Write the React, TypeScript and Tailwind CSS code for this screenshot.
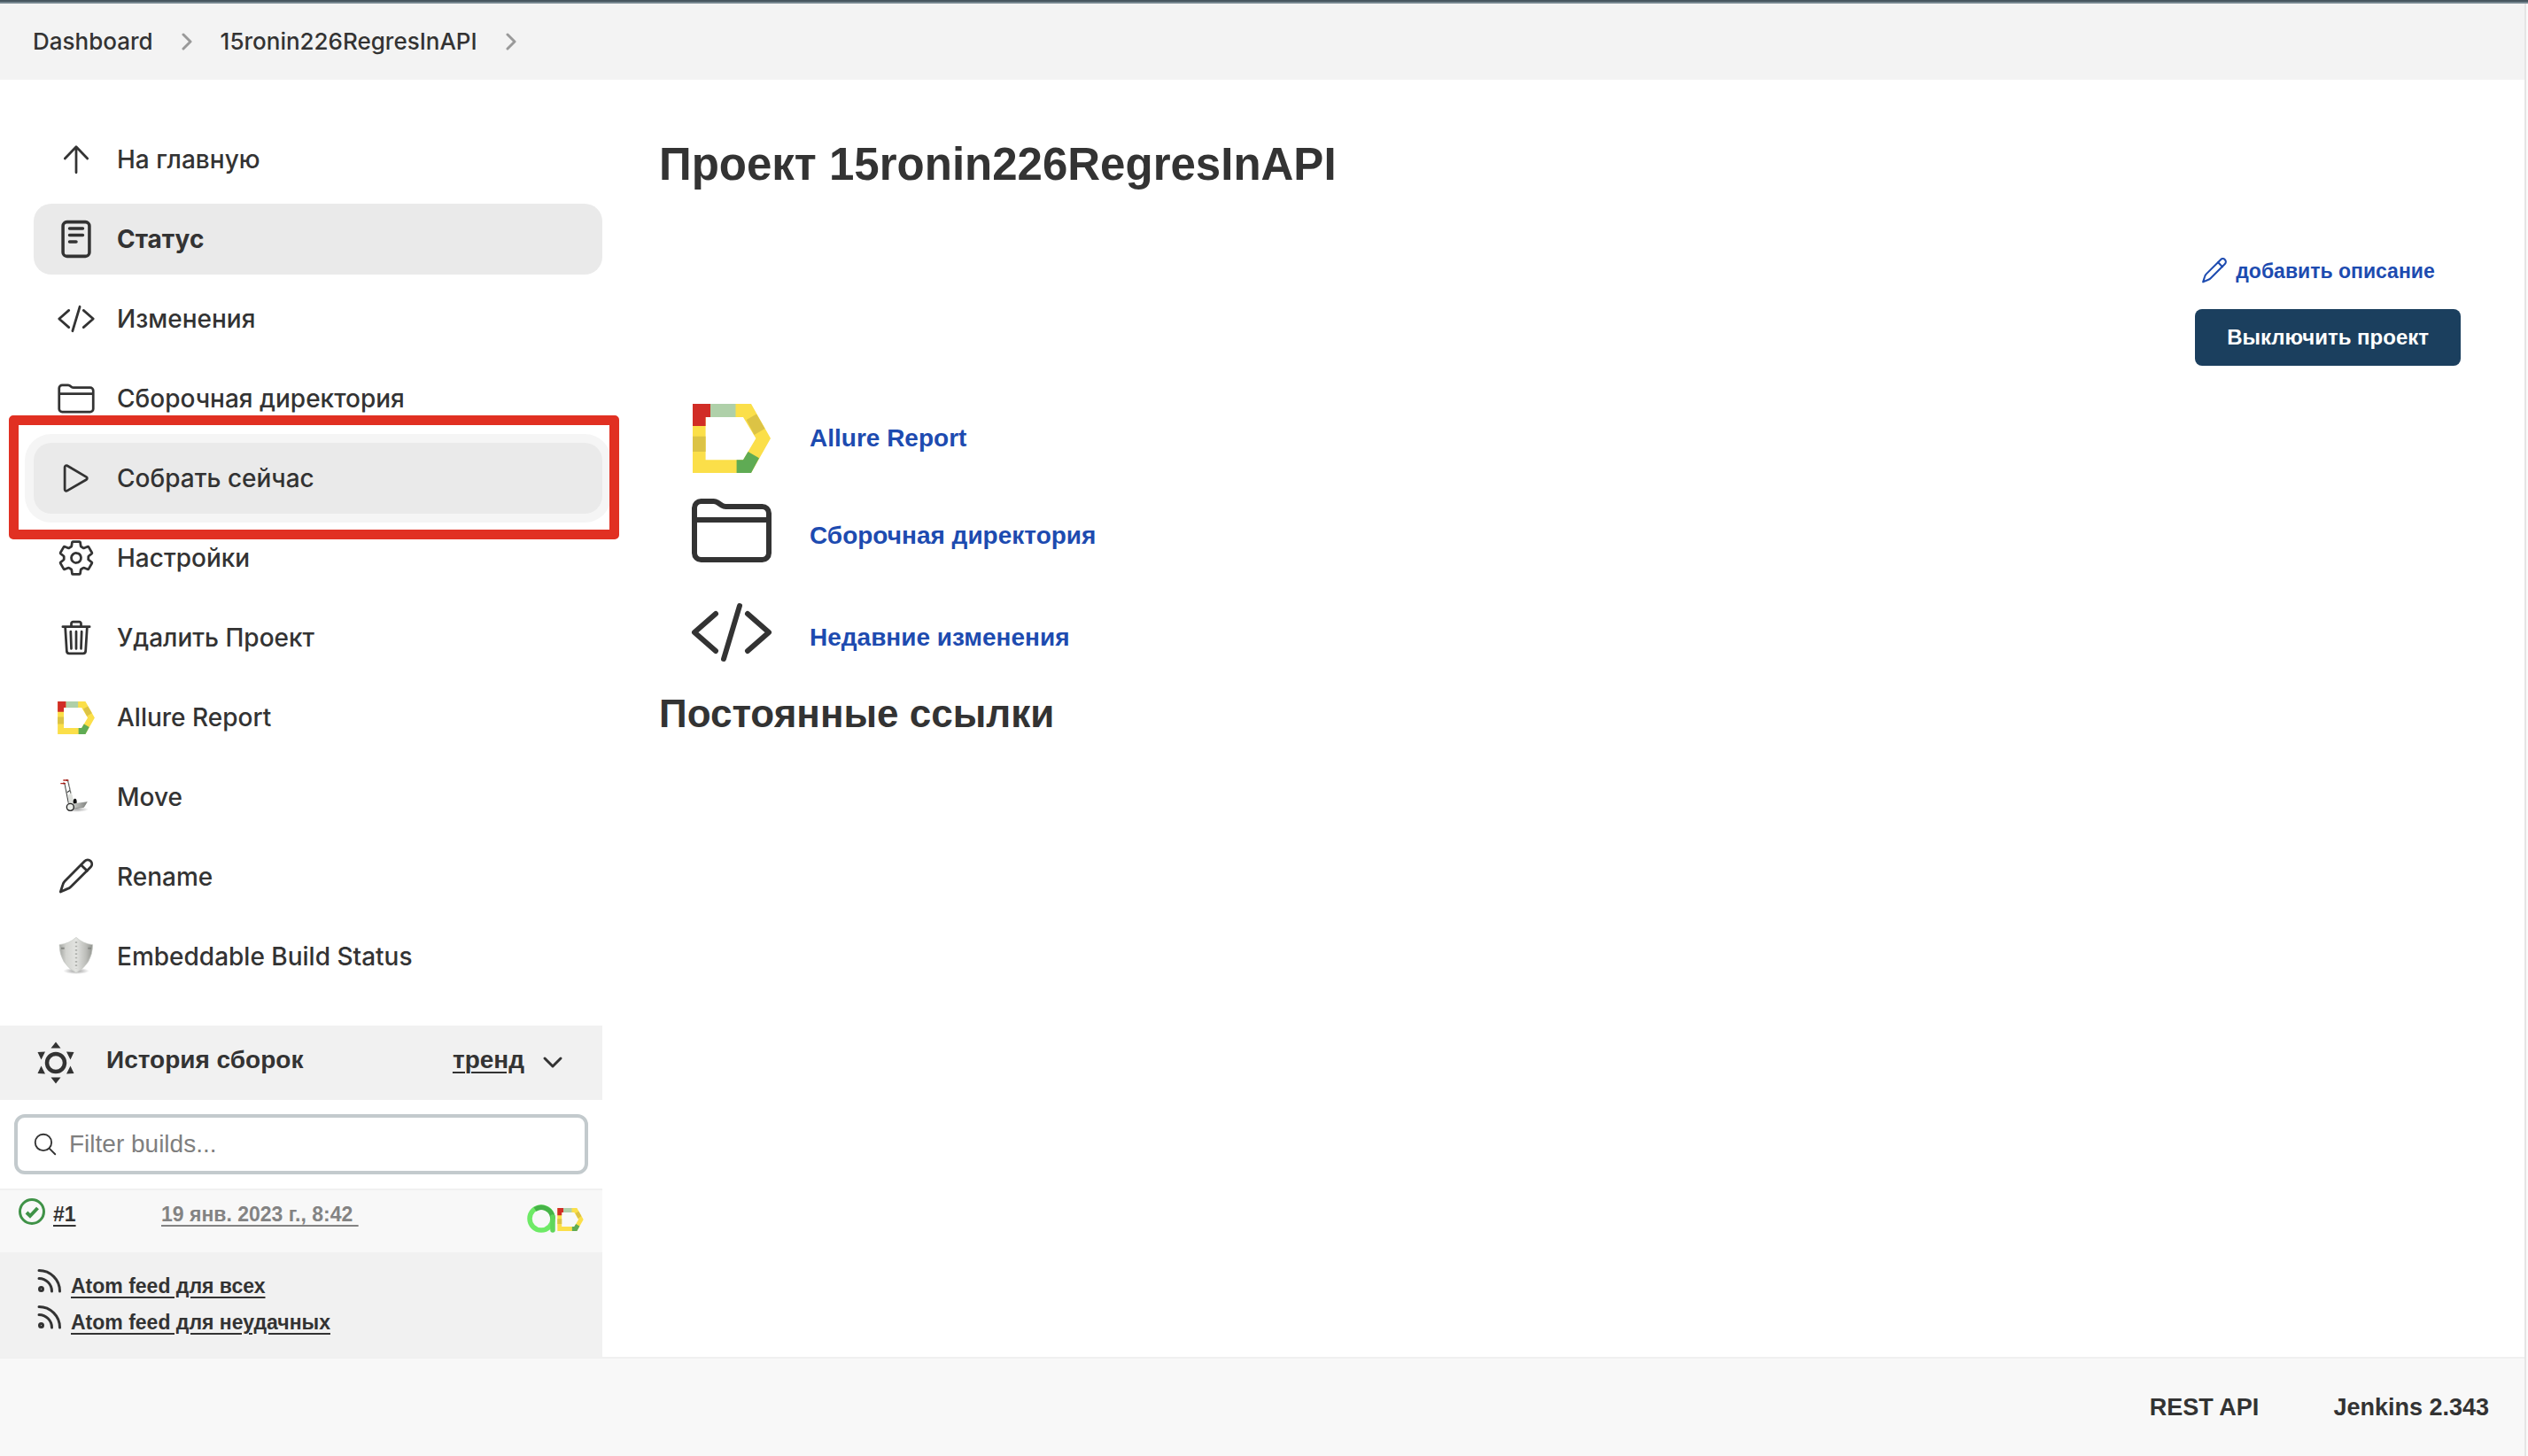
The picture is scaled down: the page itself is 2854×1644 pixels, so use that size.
import type { ReactNode } from "react";
import { IoSearchOutline, IoSettingsOutline } from "react-icons/io5";

type IconProps = { className?: string };

function Stroke({ className = "size-11", viewBox = "0 0 512 512", width = 32, children }: IconProps & { viewBox?: string; width?: number; children: ReactNode }) {
  return (
    <svg className={className} viewBox={viewBox} fill="none" stroke="currentColor" strokeWidth={width} strokeLinecap="round" strokeLinejoin="round" aria-hidden="true">
      {children}
    </svg>
  );
}

const ArrowUp = () => (
  <Stroke>
    <path d="M108 244L256 90l148 154M256 94v334" />
  </Stroke>
);

const Reader = () => (
  <Stroke viewBox="20 20 472 472" width={38}>
    <rect x="96" y="48" width="320" height="416" rx="48" />
    <path d="M176 128h160M176 208h160M176 288h80" />
  </Stroke>
);

const Code = ({ className }: IconProps) => (
  <Stroke className={className}>
    <path d="M160 368L32 256l128-112M352 368l128-112-128-112M304 96l-96 320" />
  </Stroke>
);

const Folder = ({ className }: IconProps) => (
  <Stroke className={className}>
    <path d="M440 432H72a40 40 0 01-40-40V120a40 40 0 0140-40h75.89a40 40 0 0122.19 6.72l27.84 18.56a40 40 0 0022.19 6.72H440a40 40 0 0140 40v240a40 40 0 01-40 40zM32 192h448" />
  </Stroke>
);

const Play = () => (
  <Stroke>
    <path d="M106 111v290c0 17.44 17 28.52 31 20.16l253.9-148.37c12.12-7.25 12.12-26.33 0-33.58L137 90.84c-14-8.36-31 2.72-31 20.16z" />
  </Stroke>
);

const Trash = () => (
  <Stroke>
    <path d="M112 112l20 320c.95 18.49 14.4 32 32 32h184c17.67 0 30.87-13.51 32-32l20-320M80 112h352M192 112V72a23.93 23.93 0 0124-24h80a23.93 23.93 0 0124 24v40M256 176v224M184 176l8 224M328 176l-8 224" />
  </Stroke>
);

const Pencil = ({ className }: IconProps) => (
  <Stroke className={className} viewBox="74 564 132 132" width={8.5}>
    <path d="M87 681L95 656Q97 649 102 644L169 577A13.500 13.500 0 0 1 189 597L122 664Q117 669 110 671Z" />
    <path d="M157 590l20 20" />
  </Stroke>
);

const Allure = ({ className = "h-[37px] w-11" }: IconProps) => (
  <svg className={className} viewBox="0 0 88 78" aria-hidden="true">
    <path fill="#fbdf49" fillRule="evenodd" d="M0 0H66L88 39L66 78H0zM14.600 15V63.300H57L71.400 39L57 15z" />
    <path fill="#d12d26" d="M0 0H20V15H14.600V25H0z" />
    <path fill="#afd0a9" d="M20 0H48.500V15H20z" />
    <path fill="#dcc345" d="M60.700 18L72 11.500L81.500 28L69.500 35zM0 36.700H14.600V54H0z" />
    <path fill="#5fab54" d="M49.600 63.300H57L62.500 54L75 61.300L66 78H49.600z" />
  </svg>
);

const HandTruck = () => (
  <svg className="size-11" viewBox="74 294 132 132" aria-hidden="true">
    <defs>
      <linearGradient id="plate" x1="0" x2="1">
        <stop offset="0" stopColor="#d6d8d4" />
        <stop offset="1" stopColor="#80827f" />
      </linearGradient>
      <radialGradient id="truckShadow">
        <stop offset="0" stopColor="#000" stopOpacity=".35" />
        <stop offset="1" stopColor="#000" stopOpacity="0" />
      </radialGradient>
    </defs>
    <ellipse cx="142" cy="402" rx="40" ry="9" fill="url(#truckShadow)" />
    <path d="M101 314l13 66M112 304l12 52M108 345l12-8" fill="none" stroke="#3a3c3b" strokeWidth="3.500" />
    <path d="M103 316l14 64M114 306l11 50" fill="none" stroke="#e4e6e3" strokeWidth="1.500" />
    <path d="M87 314h17M96 303h18" stroke="#b3261e" strokeWidth="4" />
    <path d="M98 310v6M109 300v6" stroke="#7d1712" strokeWidth="3" />
    <path d="M112 354l12-9 10 36-16 8z" fill="#dfe1dd" />
    <ellipse cx="136" cy="376" rx="6" ry="11" fill="#111" />
    <path d="M122 383l55-7-11 18-40 6z" fill="url(#plate)" />
    <path d="M177 376l-11 18-34 5" fill="none" stroke="#6f726e" strokeWidth="2" />
    <circle cx="120" cy="394" r="12" fill="#eceeea" stroke="#222" strokeWidth="4" />
  </svg>
);

const Shield = () => (
  <svg className="size-11" viewBox="74 834 132 132" aria-hidden="true">
    <defs>
      <linearGradient id="shieldFill" x1="0" x2="1">
        <stop offset="0" stopColor="#a3a5a1" />
        <stop offset=".2" stopColor="#d3d4d0" />
        <stop offset=".5" stopColor="#e3e4e1" />
        <stop offset=".8" stopColor="#bcbdb9" />
        <stop offset="1" stopColor="#92948f" />
      </linearGradient>
      <radialGradient id="shieldShadow">
        <stop offset="0" stopColor="#000" stopOpacity=".4" />
        <stop offset="1" stopColor="#000" stopOpacity="0" />
      </radialGradient>
    </defs>
    <ellipse cx="140" cy="949" rx="44" ry="11" fill="url(#shieldShadow)" />
    <path d="M140 835Q116 857 83 860Q84 925 140 955Q195 925 196 860Q163 857 140 835z" fill="url(#shieldFill)" stroke="#c9cbc7" strokeWidth="2" />
    <path d="M140 850v92" stroke="#aeb0ac" strokeWidth="7" strokeDasharray="5 8" />
    <path d="M89 872h11M180 872h11" stroke="#858783" strokeWidth="6" />
  </svg>
);

const Weather = () => (
  <svg className="h-12 w-[42px]" viewBox="0 0 42 48" aria-hidden="true">
    <circle cx="21" cy="24" r="10" fill="none" stroke="#333" strokeWidth="4.500" />
    <path fill="#333" d="M21 .5l5.500 7h-11zM21 47.500l5.500-7h-11zM.5 12l8.500-.5-4.500 9zM41.500 12l-8.500-.5 4.500 9zM.5 36l8.500.5-4.500-9zM41.500 36l-8.500.5 4.500-9z" />
  </svg>
);

const Chevron = ({ className }: IconProps) => (
  <Stroke className={className} viewBox="0 0 12 20" width={3}>
    <path d="M2 2l8 8-8 8" />
  </Stroke>
);

const ChevronDown = () => (
  <Stroke className="h-4 w-6" viewBox="0 0 24 16" width={3}>
    <path d="M3 3l9 9 9-9" />
  </Stroke>
);

const Success = () => (
  <svg className="size-8" viewBox="0 0 32 32" fill="none" stroke="#3f9247" aria-hidden="true">
    <circle cx="16" cy="16" r="13.500" strokeWidth="3" />
    <path d="M10 17l4 4 8.500-9" strokeWidth="4" />
  </svg>
);

const ReportMark = () => (
  <svg className="h-8 w-[34px]" viewBox="0 0 34 32" fill="none" aria-hidden="true">
    <circle cx="16" cy="16" r="13" stroke="#6eea66" strokeWidth="5.500" />
    <path d="M9 5.500a13 13 0 0 1 20 10.500" stroke="#46b348" strokeWidth="5.500" />
    <path d="M29 14v15" stroke="#5fd65b" strokeWidth="5.500" strokeLinecap="round" />
  </svg>
);

const Rss = () => (
  <Stroke className="size-7" viewBox="0 0 28 28" width={3}>
    <circle cx="4.500" cy="23.500" r="2" />
    <path d="M2 11.500c8 0 14.500 6.500 14.500 14.500M2 2.500c13 0 23.500 10.500 23.500 23.500" />
  </Stroke>
);

type Task = { label: string; icon: ReactNode; state?: "active" | "focused" };

const tasks: Task[] = [
  { label: "На главную", icon: <ArrowUp /> },
  { label: "Статус", icon: <Reader />, state: "active" },
  { label: "Изменения", icon: <Code /> },
  { label: "Сборочная директория", icon: <Folder /> },
  { label: "Собрать сейчас", icon: <Play />, state: "focused" },
  { label: "Настройки", icon: <IoSettingsOutline className="size-11" /> },
  { label: "Удалить Проект", icon: <Trash /> },
  { label: "Allure Report", icon: <Allure /> },
  { label: "Move", icon: <HandTruck /> },
  { label: "Rename", icon: <Pencil /> },
  { label: "Embeddable Build Status", icon: <Shield /> },
];

const taskStyles = {
  plain: "font-medium",
  active: "bg-[#eaeaea] font-bold",
  focused: "bg-[#eaeaea] font-medium shadow-[0_0_0_10px_#f5f5f5]",
};

function TaskLink({ task }: { task: Task }) {
  return (
    <li className="relative">
      <a href="#" className={`flex h-20 items-center gap-6 rounded-[20px] pl-[26px] text-[28px] leading-10 ${taskStyles[task.state ?? "plain"]}`}>
        {task.icon}
        {task.label}
      </a>
      {task.state === "focused" && (
        <span className="pointer-events-none absolute -top-[31px] -right-[19px] -bottom-[29px] -left-7 z-10 rounded-[5px] border-[11px] border-[#e13022]" />
      )}
    </li>
  );
}

function BuildHistory() {
  return (
    <section className="flex flex-1 flex-col">
      <div className="flex h-[84px] items-center bg-[#f1f1f1] pr-11 pl-[42px] text-[28px] leading-10 font-bold">
        <Weather />
        <h2 className="pb-1.5 pl-9">История сборок</h2>
        <a href="#" className="ml-auto pr-5 pb-1.5 underline decoration-2 underline-offset-4">тренд</a>
        <button type="button" aria-label="Свернуть">
          <ChevronDown />
        </button>
      </div>
      <div className="px-4 py-4">
        <label className="flex h-[68px] items-center gap-3 rounded-xl border-4 border-[#c3cacd] bg-white pl-4">
          <IoSearchOutline className="size-[30px]" />
          <input type="text" aria-label="Filter builds" placeholder="Filter builds..." className="min-w-0 flex-1 bg-transparent text-[28px] leading-10 outline-none placeholder:text-[#7f7f7f]" />
        </label>
      </div>
      <div className="flex h-[72px] border-t-2 border-[#f0f0f0] bg-[#f8f8f8] pl-5 text-[23px] leading-8 font-bold">
        <div className="flex w-[162px] items-start gap-2 pt-2">
          <Success />
          <a href="#" className="pt-[3px] underline decoration-2 underline-offset-4">#1</a>
        </div>
        <a href="#" className="pt-[11px] whitespace-pre text-[#838383] underline decoration-2 underline-offset-4">{"19 янв. 2023 г., 8:42 "}</a>
        <div className="ml-auto flex items-start pt-4 pr-[21px]">
          <a href="#" aria-label="Allure TestOps"><ReportMark /></a>
          <a href="#" aria-label="Allure Report" className="pt-1"><Allure className="h-[26px] w-[30px]" /></a>
        </div>
      </div>
      <div className="flex flex-1 flex-col bg-[#f1f1f1] pt-[18px] pl-[42px] text-[23px] leading-[41px] font-bold">
        {["Atom feed для всех", "Atom feed для неудачных"].map((feed) => (
          <div key={feed} className="flex gap-2.5">
            <Rss />
            <a href="#" className="underline decoration-2 underline-offset-4">{feed}</a>
          </div>
        ))}
      </div>
    </section>
  );
}

const links = [
  { label: "Allure Report", icon: <Allure className="h-[78px] w-[88px]" />, row: "h-[104px]", cell: "" },
  { label: "Сборочная директория", icon: <Folder className="size-24" />, row: "h-[115px]", cell: "pb-3" },
  { label: "Недавние изменения", icon: <Code className="size-24" />, row: "h-[115px]", cell: "pb-3" },
];

export default function App() {
  return (
    <div className="flex min-h-screen flex-col bg-[#fafafa] font-['Liberation_Sans',Arial,sans-serif] text-[#333]">
      <div className="h-1 border-b-2 border-[#76868f] bg-[#46555e]" />
      <div className="mr-0.5 flex flex-1 flex-col border-r-2 border-[#e5e5e5] bg-white">
        <nav className="flex h-[86px] items-center gap-8 bg-[#f3f3f3] pl-[37px] font-['Inter',sans-serif] text-[26px] leading-10 font-medium">
          <a href="#">Dashboard</a>
          <Chevron className="h-5 w-3 text-[#999]" />
          <a href="#">15ronin226RegresInAPI</a>
          <Chevron className="h-5 w-3 text-[#999]" />
        </nav>
        <div className="flex flex-1">
          <aside className="flex w-[680px] shrink-0 flex-col pt-[50px]">
            <ul className="mb-[38px] ml-[38px] flex flex-col gap-2.5 font-['Inter',sans-serif]">
              {tasks.map((task) => (
                <TaskLink key={task.label} task={task} />
              ))}
            </ul>
            <BuildHistory />
          </aside>
          <main className="flex-1 pt-[66px] pr-[72px] pl-16">
            <h1 className="text-[51px] leading-[60px] font-bold">Проект 15ronin226RegresInAPI</h1>
            <div className="mt-[70px] flex justify-end">
              <div className="flex flex-col items-start gap-[23px] font-bold">
                <a href="#" className="flex items-center gap-2 pl-1.5 text-[23px] leading-10 text-[#1d4bb0]">
                  <Pencil className="size-8" />
                  добавить описание
                </a>
                <button type="button" className="h-16 rounded-lg bg-[#1b3f5e] px-9 text-[24px] leading-8 text-white">
                  Выключить проект
                </button>
              </div>
            </div>
            <ul className="mt-[30px] pl-[34px]">
              {links.map((link) => (
                <li key={link.label} className={`flex items-center gap-10 ${link.row}`}>
                  <span className={`flex w-24 justify-center ${link.cell}`}>{link.icon}</span>
                  <a href="#" className="text-[28px] leading-10 font-bold text-[#1d4bb0]">{link.label}</a>
                </li>
              ))}
            </ul>
            <h2 className="text-[44px] leading-[58px] font-bold">Постоянные ссылки</h2>
          </main>
        </div>
        <footer className="flex h-28 items-center justify-end gap-[84px] border-t-2 border-[#f0f0f0] bg-[#f8f8f8] pr-10 text-[27px] leading-10 font-bold">
          <a href="#">REST API</a>
          <a href="#">Jenkins 2.343</a>
        </footer>
      </div>
    </div>
  );
}
